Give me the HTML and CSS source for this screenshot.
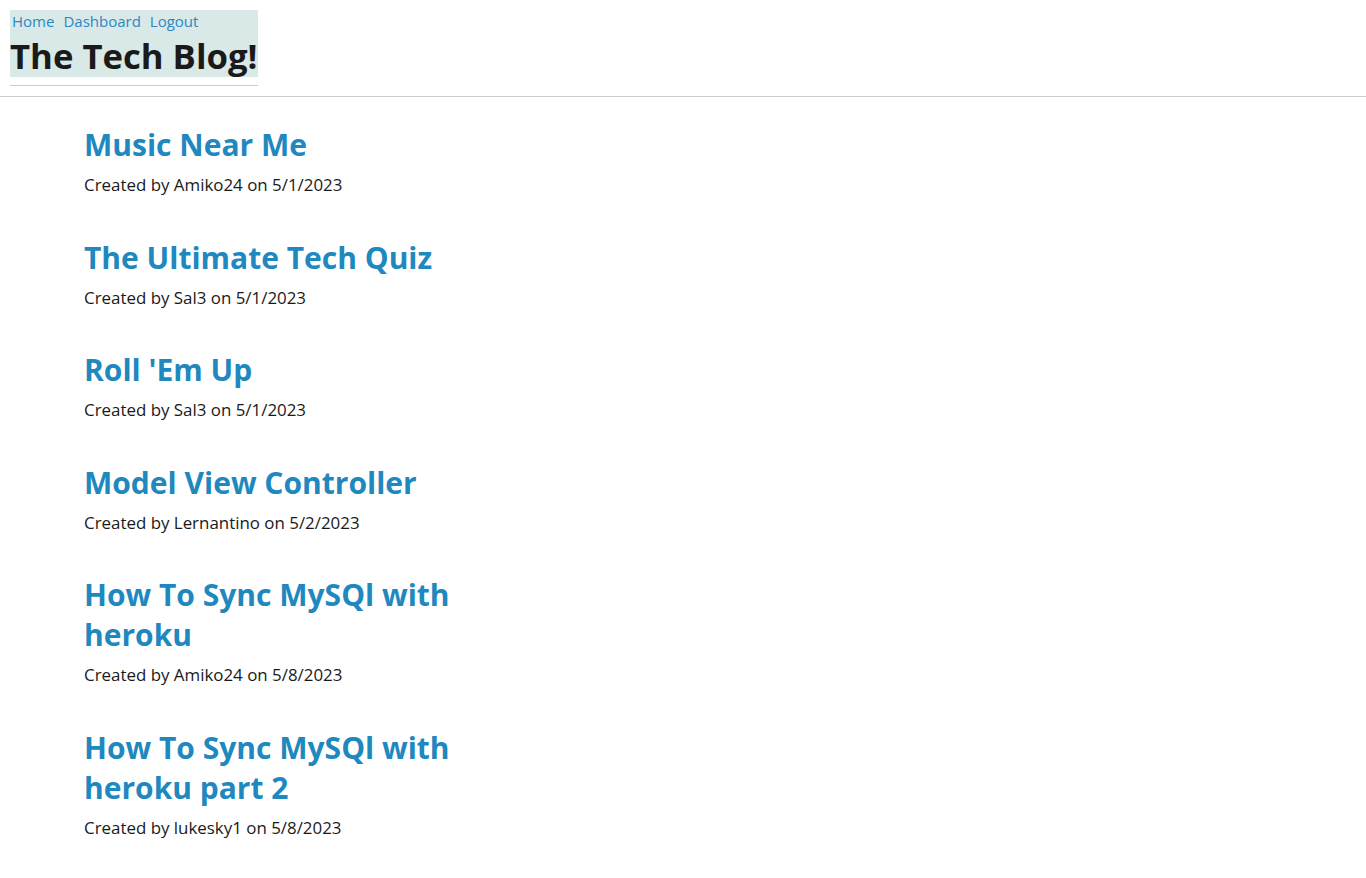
FILE: index.html
```html
<!DOCTYPE html>
<html lang="en">
<head>
<meta charset="utf-8">
<title>The Tech Blog!</title>
<link rel="stylesheet" href="styles.css">
</head>
<body>
<header class="site-header">
  <div class="brand">
    <div class="brand-box">
      <nav class="nav">
        <a href="#">Home</a>
        <a href="#">Dashboard</a>
        <a href="#">Logout</a>
      </nav>
      <h1 class="site-title">The Tech Blog!</h1>
    </div>
  </div>
</header>
<main class="posts">
  <article class="post">
    <h2 class="post-title"><a href="#">Music Near Me</a></h2>
    <p class="post-meta">Created by Amiko24 on 5/1/2023</p>
  </article>
  <article class="post">
    <h2 class="post-title"><a href="#">The Ultimate Tech Quiz</a></h2>
    <p class="post-meta">Created by Sal3 on 5/1/2023</p>
  </article>
  <article class="post">
    <h2 class="post-title"><a href="#">Roll 'Em Up</a></h2>
    <p class="post-meta">Created by Sal3 on 5/1/2023</p>
  </article>
  <article class="post">
    <h2 class="post-title"><a href="#">Model View Controller</a></h2>
    <p class="post-meta">Created by Lernantino on 5/2/2023</p>
  </article>
  <article class="post">
    <h2 class="post-title"><a href="#">How To Sync MySQl with heroku</a></h2>
    <p class="post-meta">Created by Amiko24 on 5/8/2023</p>
  </article>
  <article class="post">
    <h2 class="post-title"><a href="#">How To Sync MySQl with heroku part 2</a></h2>
    <p class="post-meta">Created by lukesky1 on 5/8/2023</p>
  </article>
</main>
</body>
</html>
```

FILE: styles.css
```css
html, body {
  margin: 0;
  padding: 0;
  background: #ffffff;
}

body {
  font-family: "Open Sans", "Noto Sans", sans-serif;
  color: #1a1a1a;
}

.site-header {
  padding: 10px 10px 10px 10px;
  border-bottom: 1px solid #cccccc;
}

.brand {
  display: inline-block;
  padding-bottom: 8px;
  border-bottom: 1px solid #cccccc;
}

.brand-box {
  background: #d9e9e7;
}

.nav {
  display: flex;
  gap: 9px;
  padding-left: 2px;
  font-size: 15px;
  line-height: 22px;
}

.nav a {
  color: #2a88c4;
  text-decoration: none;
}

.site-title {
  margin: 0;
  font-size: 34.7px;
  line-height: 45px;
  font-weight: 700;
  color: #1a1a1a;
  position: relative;
  top: 1px;
}

.posts {
  padding: 28px 0 0 84px;
  width: 400px;
}

.post {
  margin-bottom: 32.5px;
}

.post-title {
  margin: 0;
  font-size: 30px;
  line-height: 40px;
  font-weight: 700;
}

.post-title a {
  color: #1e88bf;
  text-decoration: none;
}

.post-meta {
  margin: 0;
  font-size: 16.9px;
  line-height: 40px;
  color: #1a1a1a;
}
```
